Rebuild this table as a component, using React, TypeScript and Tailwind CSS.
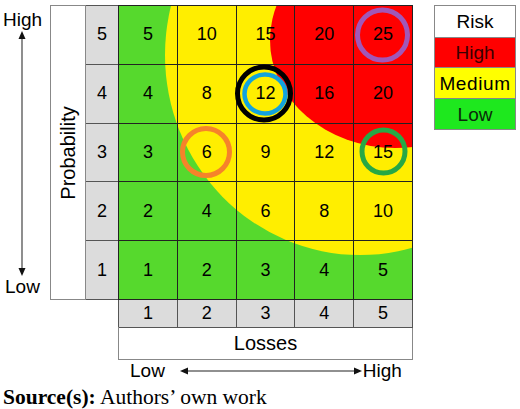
const sans = "font-['Liberation_Sans',Arial,sans-serif]";

const levels = [5, 4, 3, 2, 1];
const losses = [1, 2, 3, 4, 5];

function VArrow() {
  return (
    <svg width="50" height="245" viewBox="0 0 50 245" className="block">
      <line x1="22" y1="6" x2="22" y2="239" stroke="#444" strokeWidth="1.2" />
      <polygon points="22,0 18.5,8 25.5,8" fill="#111" />
      <polygon points="22,245 18.5,237 25.5,237" fill="#111" />
    </svg>
  );
}

function HArrow() {
  return (
    <svg width="182" height="10" viewBox="0 0 182 10" className="block">
      <line x1="6" y1="5" x2="176" y2="5" stroke="#222" strokeWidth="1.2" />
      <polygon points="0,5 8,1.5 8,8.5" fill="#111" />
      <polygon points="182,5 174,1.5 174,8.5" fill="#111" />
    </svg>
  );
}

function Zones() {
  return (
    <svg
      className="absolute inset-0"
      width="294"
      height="294"
      viewBox="0 0 294 294"
    >
      <rect x="0" y="0" width="294" height="294" fill="#56d92d" />
      <ellipse cx="241" cy="49" rx="195" ry="200" fill="#ffee00" />
      <ellipse cx="276" cy="34" rx="125" ry="108" fill="#ff0000" />
    </svg>
  );
}

function Rings() {
  return (
    <svg
      className="absolute inset-0 z-10 pointer-events-none"
      width="294"
      height="294"
      viewBox="0 0 294 294"
    >
      <circle cx="263.5" cy="29" r="25" fill="none" stroke="#a157b8" strokeWidth="5" />
      <circle cx="145" cy="87.5" r="26.5" fill="none" stroke="#000" strokeWidth="5" />
      <ellipse cx="146" cy="88" rx="20.5" ry="19.5" fill="none" stroke="#12a3de" strokeWidth="4.5" />
      <circle cx="87" cy="146" r="23.5" fill="none" stroke="#f6832a" strokeWidth="5" />
      <circle cx="264.5" cy="145.5" r="21.5" fill="none" stroke="#27a845" strokeWidth="5" />
    </svg>
  );
}

function Matrix() {
  return (
    <div className="relative w-[295px] h-[295px] border-l border-t border-[#222]">
      <Zones />
      <div className="relative grid grid-cols-5 grid-rows-5 w-full h-full">
        {levels.map((p) =>
          losses.map((l) => (
            <div
              key={`${p}-${l}`}
              className="flex items-center justify-center border-r border-b border-[#222] text-[18px] text-black"
            >
              {p * l}
            </div>
          ))
        )}
      </div>
      <Rings />
    </div>
  );
}

function Legend() {
  return (
    <div className="self-start ml-[21px] mt-[5px] w-[82px] border border-[#888] text-[19px] leading-none text-center">
      <div className="h-[32px] flex items-center justify-center bg-white border-b border-[#888]">
        Risk
      </div>
      <div className="h-[30px] flex items-center justify-center bg-[#ff0000] text-[#3a0000] border-b border-[#888]">
        High
      </div>
      <div className="h-[31px] flex items-center justify-center bg-[#ffff00] border-b border-[#888] tracking-[0.6px]">
        Medium
      </div>
      <div className="h-[30px] flex items-center justify-center bg-[#1ee81e] text-[#0a2a0a]">
        Low
      </div>
    </div>
  );
}

export default function App() {
  return (
    <div className={`w-[520px] h-[409px] bg-white overflow-hidden text-black ${sans}`}>
      <div className="flex h-[360px]">
        {/* probability direction */}
        <div className="w-[50px] pt-[9px] flex flex-col text-[19px] leading-[22px]">
          <div className="h-[22px] pl-[3px]">High</div>
          <VArrow />
          <div className="h-[22px] pl-[5px]">Low</div>
        </div>

        <div className="mt-[5px]">
          <div className="flex">
            <div className="w-[36px] h-[295px] border border-[#888] bg-white flex items-center justify-center">
              <span className="-rotate-90 whitespace-nowrap text-[20px] leading-none">
                Probability
              </span>
            </div>
            <div className="w-[32px] h-[295px] flex flex-col bg-[#dcdcdc] border-t border-[#555]">
              {levels.map((p) => (
                <div
                  key={p}
                  className="flex-1 flex items-center justify-center border-b border-[#555] text-[18px]"
                >
                  {p}
                </div>
              ))}
            </div>
            <Matrix />
          </div>

          <div className="ml-[68px] w-[295px]">
            <div className="grid grid-cols-5 h-[27px] bg-[#dcdcdc] border-l border-[#555]">
              {losses.map((l) => (
                <div
                  key={l}
                  className="flex items-center justify-center border-r border-b border-[#555] text-[18px]"
                >
                  {l}
                </div>
              ))}
            </div>
            <div className="h-[33px] flex items-center justify-center bg-white border-l border-r border-b border-[#888] text-[20px]">
              Losses
            </div>
          </div>
        </div>

        <Legend />
      </div>

      {/* losses direction */}
      <div className="flex items-center h-[22px] pl-[130px] text-[19px] leading-[22px]">
        <span>Low</span>
        <div className="ml-[15px]">
          <HArrow />
        </div>
        <span className="ml-[1px]">High</span>
      </div>

      <div className="mt-[3px] pl-[3px] text-[21.5px] leading-[24px] font-['Liberation_Serif','Times_New_Roman',serif]">
        <span className="font-bold">Source(s):</span> Authors’ own work
      </div>
    </div>
  );
}
